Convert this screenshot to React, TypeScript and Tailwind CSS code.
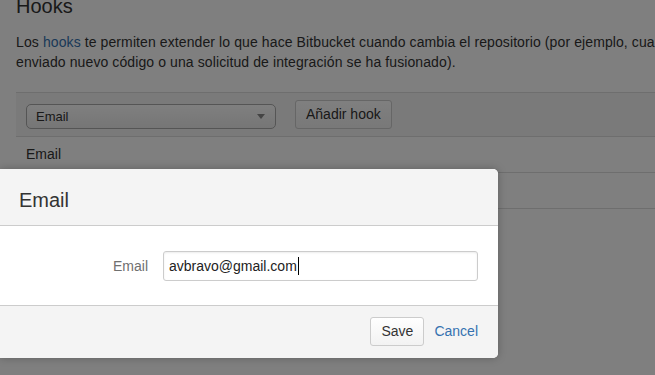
export default function App() {
  return (
    <div className="relative h-[375px] w-[655px] overflow-hidden bg-white font-['Liberation_Sans',Arial,sans-serif] text-[#333]">
      {/* page under the dialog */}
      <div className="w-[900px] pl-4">
        <h2 className="mt-[-6px] text-[20px] leading-[24px]">Hooks</h2>
        <p className="mt-[14px] whitespace-nowrap text-[14px] leading-[20px] tracking-[0.1px]">
          Los <a className="text-[#3572b0]">hooks</a> te permiten extender lo que hace Bitbucket cuando cambia el
          repositorio (por ejemplo, cuando se ha
          <br />
          enviado nuevo código o una solicitud de integración se ha fusionado).
        </p>

        <div className="mt-[20px] border-t border-[#dcdcdc]">
          <div className="flex h-[44px] items-start border-b border-[#dcdcdc] bg-[#f5f5f5] pl-[10px] pt-[7px]">
            <div className="mt-[4px] flex h-[25px] w-[250px] items-center justify-between rounded-[5px] border border-[#aaa] bg-gradient-to-b from-white to-[#ececec] pl-[9px] pr-[10px] text-[13px]">
              <span>Email</span>
              <span className="h-0 w-0 border-x-[4px] border-t-[5px] border-x-transparent border-t-[#888]" />
            </div>
            <button className="ml-[19px] h-[29px] rounded-[3px] border border-[#ccc] bg-gradient-to-b from-white to-[#f2f2f2] px-[10px] text-[14px] text-[#333]">
              Añadir hook
            </button>
          </div>
          <div className="flex h-[36px] items-center border-b border-[#dcdcdc] pl-[10px] text-[14px]">Email</div>
          <div className="h-[36px] border-b border-[#dcdcdc]" />
        </div>
      </div>

      <div className="absolute inset-0 bg-black/50" />

      {/* dialog */}
      <div className="absolute left-0 top-[169px] w-[498px] overflow-hidden rounded-r-[5px] bg-white shadow-[0_0_8px_rgba(0,0,0,0.25)]">
        <div className="border-b border-[#cccccc] bg-[#f4f4f4] pb-[13px] pl-[19px] pt-[19px]">
          <h3 className="text-[20px] leading-[24px] text-[#333]">Email</h3>
        </div>
        <div className="flex items-center pb-[24px] pt-[25px]">
          <label className="w-[148px] text-right text-[14px] text-[#707070]">Email</label>
          <div className="ml-[15px] flex h-[30px] w-[315px] items-center rounded-[3px] border border-[#ccc] pl-[5px] text-[14px] text-[#222] shadow-[inset_0_1px_2px_rgba(0,0,0,0.08)]">
            <span>avbravo@gmail.com</span>
            <span className="ml-[1px] h-[18px] w-[1px] bg-black" />
          </div>
        </div>
        <div className="flex items-center justify-end border-t border-[#cccccc] bg-[#f4f4f4] pb-[12px] pr-[20px] pt-[11px]">
          <button className="h-[29px] rounded-[3px] border border-[#ccc] bg-gradient-to-b from-white to-[#f2f2f2] px-[10px] text-[14px] text-[#333]">
            Save
          </button>
          <a className="ml-[10px] text-[14px] text-[#3572b0]">Cancel</a>
        </div>
      </div>
    </div>
  );
}
